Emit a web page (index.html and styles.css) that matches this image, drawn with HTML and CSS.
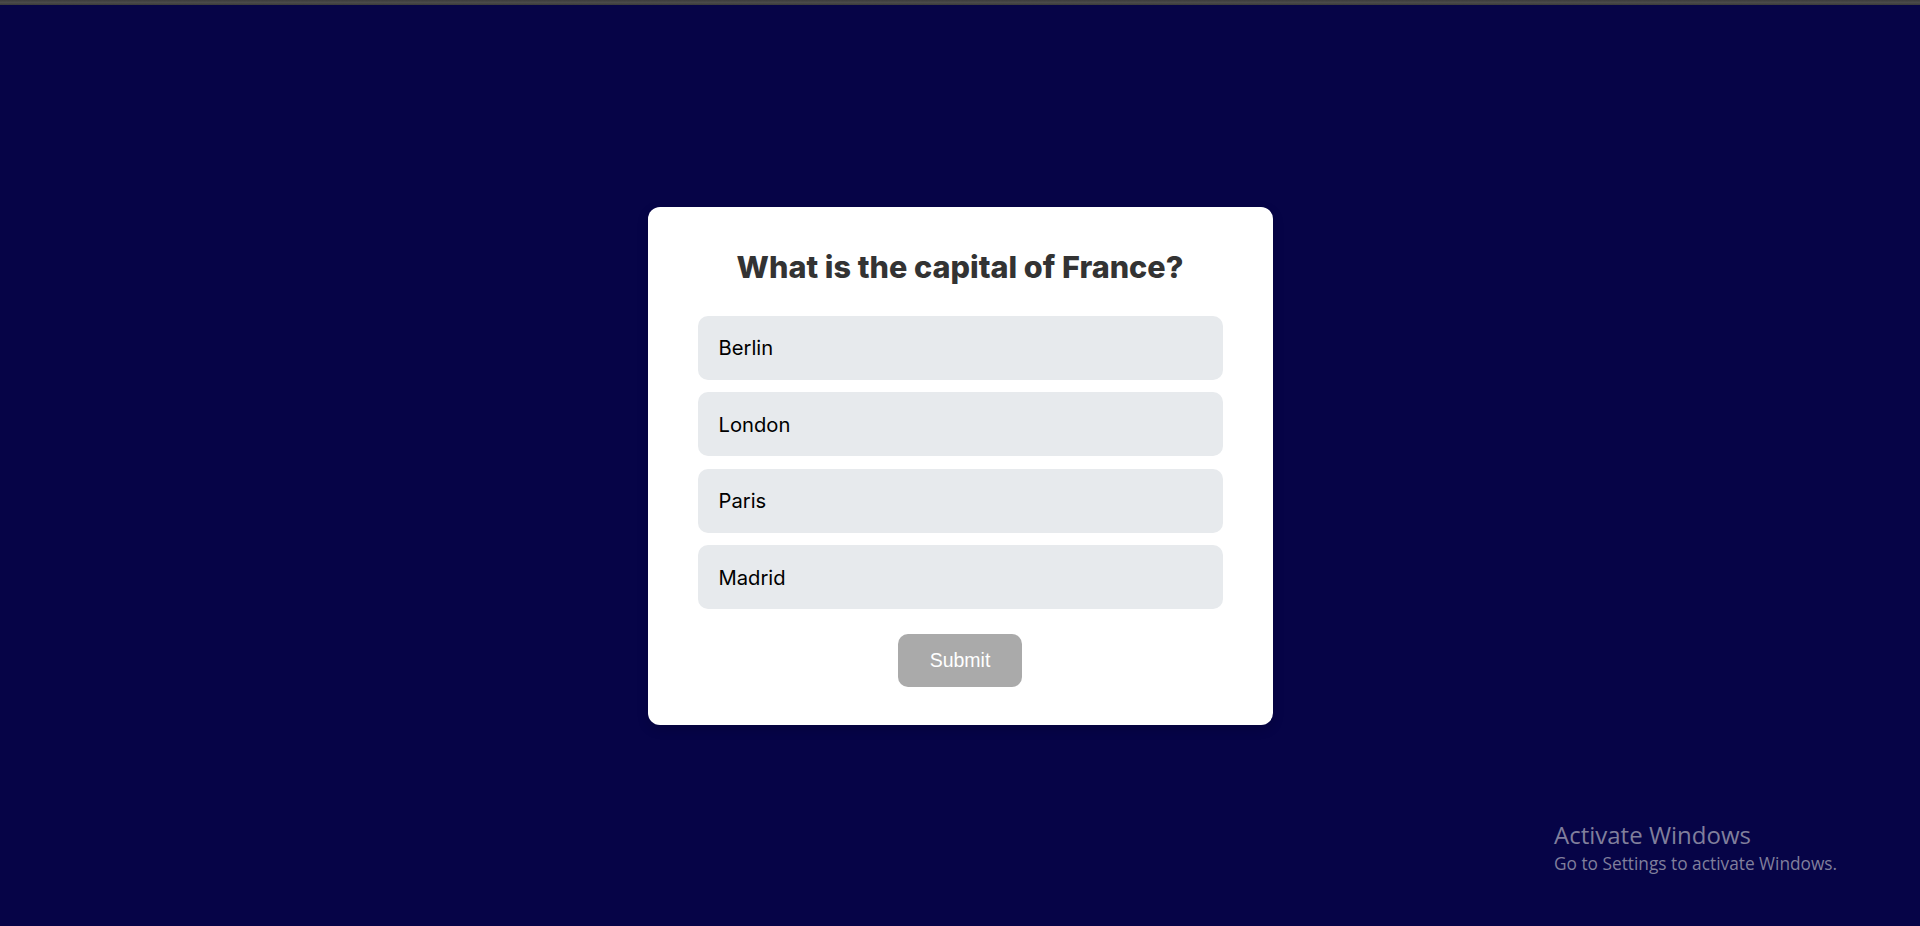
FILE: index.html
```html
<!DOCTYPE html>
<html lang="en">
<head>
<meta charset="utf-8">
<title>Quiz</title>
<link rel="stylesheet" href="styles.css">
</head>
<body>
<div class="topbar"></div>
<main class="stage">
  <section class="card">
    <h1 class="question">What is the capital of France?</h1>
    <ul class="options">
      <li class="option">Berlin</li>
      <li class="option">London</li>
      <li class="option">Paris</li>
      <li class="option">Madrid</li>
    </ul>
    <button class="submit" type="button">Submit</button>
  </section>
</main>
<div class="watermark">
  <div class="wm-title">Activate Windows</div>
  <div class="wm-sub">Go to Settings to activate Windows.</div>
</div>
</body>
</html>
```
FILE: styles.css
```css
* { box-sizing: border-box; }
html, body { margin: 0; padding: 0; }
body {
  background: #060447;
  height: 926px;
  overflow: hidden;
  font-family: "Inter", "Liberation Sans", sans-serif;
}
.topbar {
  height: 5px;
  background: linear-gradient(#3c3c3c, #4a4a4a 50%, #3a3a3a);
}
.stage {
  height: 921px;
  display: flex;
  align-items: center;
  justify-content: center;
}
.card {
  width: 625px;
  background: #ffffff;
  border-radius: 12px;
  padding: 40px 50px 38px;
  display: flex;
  flex-direction: column;
  align-items: center;
  box-shadow: 0 4px 12px rgba(0,0,0,0.15);
}
.question {
  margin: 0 0 29px;
  font-size: 30.6px;
  line-height: 40px;
  font-weight: 800;
  color: #333333;
  text-align: center;
}
.options {
  list-style: none;
  margin: 0;
  padding: 0;
  width: 100%;
  display: flex;
  flex-direction: column;
  gap: 12.5px;
}
.option {
  height: 64px;
  background: #e7eaed;
  border-radius: 10px;
  padding: 0 21px;
  display: flex;
  align-items: center;
  font-size: 20.2px;
  color: #000000;
}
.submit {
  margin-top: 24.5px;
  width: 124px;
  height: 53px;
  border: none;
  border-radius: 10px;
  background: #aaaaaa;
  color: #ffffff;
  font-family: "Liberation Sans", Arial, sans-serif;
  font-size: 19.5px;
  padding: 0;
}
.watermark {
  position: absolute;
  left: 1554px;
  top: 820px;
  color: #807f9c;
  font-family: "Open Sans", "Noto Sans", sans-serif;
}
.wm-title {
  font-size: 24px;
  line-height: 30px;
}
.wm-sub {
  font-size: 17.3px;
  line-height: 26px;
  margin-top: 1px;
}
```
